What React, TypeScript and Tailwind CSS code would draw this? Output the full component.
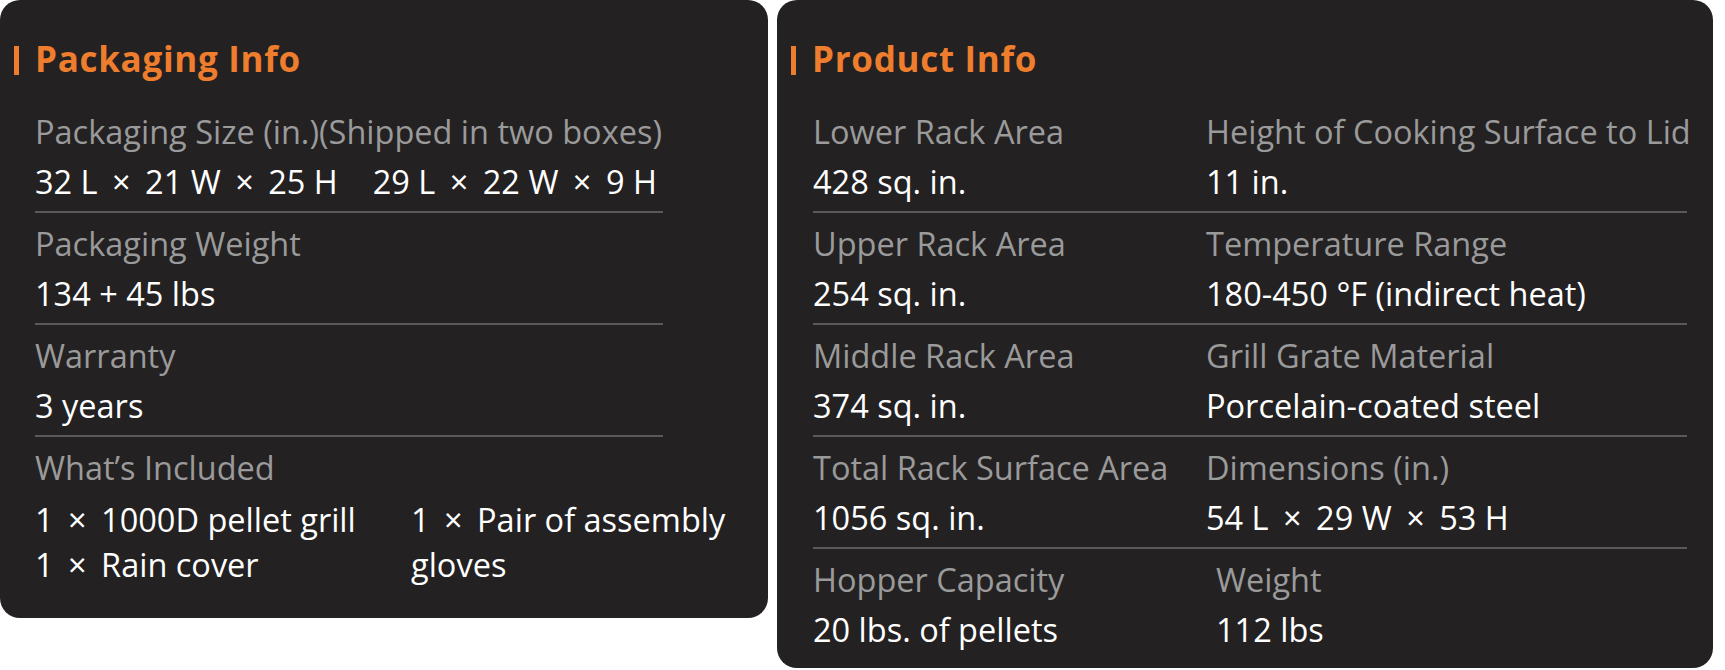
import React from "react";

type Spec = { label: string; value: React.ReactNode; shift?: boolean };

// the multiplication sign sits wider in the original font
const X = () => <span className="mx-[6px]">×</span>;

const productRows: [Spec, Spec][] = [
  [
    { label: "Lower Rack Area", value: "428 sq. in." },
    { label: "Height of Cooking Surface to Lid", value: "11 in." },
  ],
  [
    { label: "Upper Rack Area", value: "254 sq. in." },
    { label: "Temperature Range", value: "180-450 °F (indirect heat)" },
  ],
  [
    { label: "Middle Rack Area", value: "374 sq. in." },
    { label: "Grill Grate Material", value: "Porcelain-coated steel" },
  ],
  [
    { label: "Total Rack Surface Area", value: "1056 sq. in." },
    {
      label: "Dimensions (in.)",
      value: (
        <>
          54 L <X /> 29 W <X /> 53 H
        </>
      ),
    },
  ],
  [
    { label: "Hopper Capacity", value: "20 lbs. of pellets" },
    { label: "Weight", value: "112 lbs", shift: true },
  ],
];

function Heading({ title }: { title: string }) {
  return (
    <div className="flex items-center h-[48px] mb-[18px]">
      <span className="w-[5px] h-[29px] bg-[#ee7d2d] mt-[2px]" />
      <h2 className="ml-[16px] text-[35px] leading-[48px] font-bold tracking-[0.7px] text-[#ee7d2d]">
        {title}
      </h2>
    </div>
  );
}

function Cell({ label, value, shift }: Spec) {
  return (
    <div className={shift ? "ml-[10px]" : ""}>
      <div className="text-[32.5px] leading-[40px] text-[#9a9a9a] whitespace-nowrap">{label}</div>
      <div className="mt-[10px] text-[32.5px] leading-[40px] text-white whitespace-nowrap">{value}</div>
    </div>
  );
}

export default function App() {
  return (
    <div
      className="flex items-start gap-[9px] bg-white w-[1725px] h-[670px]"
      style={{ fontFamily: '"Open Sans", "Noto Sans", sans-serif' }}
    >
      {/* packaging */}
      <section className="w-[768px] h-[618px] shrink-0 rounded-[20px] bg-[#232122] pt-[35px] pl-[14px]">
        <Heading title="Packaging Info" />
        <div className="ml-[21px] w-[628px]">
          <div className="pt-[11px] pb-[9px] border-b-2 border-[#5a5a5a]">
            <Cell
              label="Packaging Size (in.)(Shipped in two boxes)"
              value={
                <>
                  32 L <X /> 21 W <X /> 25 H
                  <span className="ml-[35px]">
                    29 L <X /> 22 W <X /> 9 H
                  </span>
                </>
              }
            />
          </div>
          <div className="pt-[11px] pb-[9px] border-b-2 border-[#5a5a5a]">
            <Cell label="Packaging Weight" value="134 + 45 lbs" />
          </div>
          <div className="pt-[11px] pb-[9px] border-b-2 border-[#5a5a5a]">
            <Cell label="Warranty" value="3 years" />
          </div>
          <div className="pt-[11px]">
            <div className="text-[32.5px] leading-[40px] text-[#9a9a9a]">What’s Included</div>
            <div className="mt-[9px] grid grid-cols-[376px_1fr] text-[32.5px] leading-[45px] text-white">
              <div>
                <div className="whitespace-nowrap">
                  1 <X /> 1000D pellet grill
                </div>
                <div className="whitespace-nowrap">
                  1 <X /> Rain cover
                </div>
              </div>
              <div>
                <div className="whitespace-nowrap">
                  1 <X /> Pair of assembly
                </div>
                <div>gloves</div>
              </div>
            </div>
          </div>
        </div>
      </section>

      {/* product */}
      <section className="w-[936px] h-[668px] shrink-0 rounded-[20px] bg-[#232122] pt-[35px] pl-[14px]">
        <Heading title="Product Info" />
        <div className="ml-[22px] w-[874px]">
          {productRows.map((row, i) => (
            <div
              key={i}
              className={
                i < productRows.length - 1
                  ? "grid grid-cols-[393px_1fr] pt-[11px] pb-[9px] border-b-2 border-[#5a5a5a]"
                  : "grid grid-cols-[393px_1fr] pt-[11px]"
              }
            >
              <Cell {...row[0]} />
              <Cell {...row[1]} />
            </div>
          ))}
        </div>
      </section>
    </div>
  );
}
